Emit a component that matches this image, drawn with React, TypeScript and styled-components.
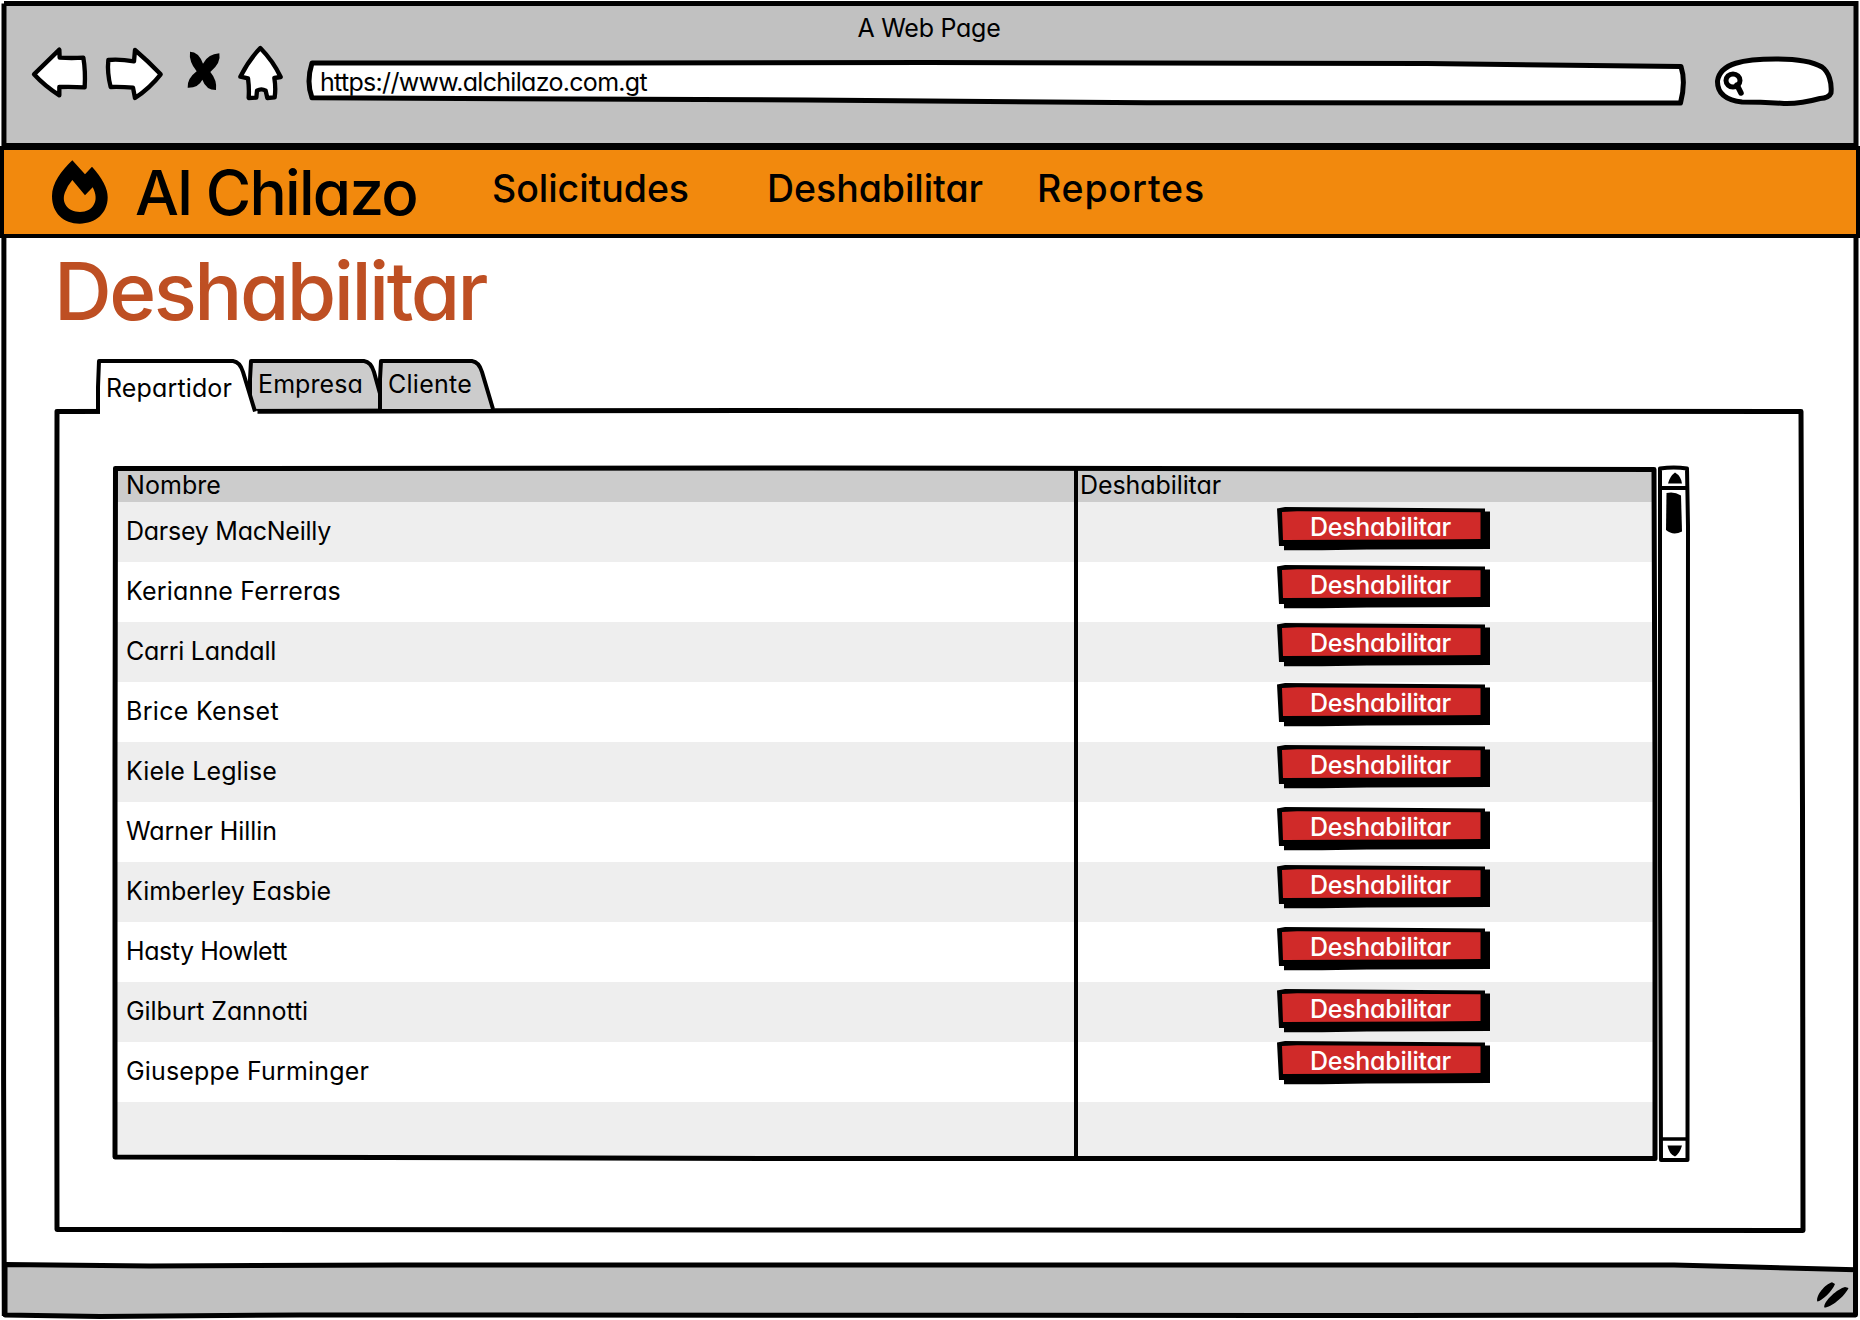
import React, { useLayoutEffect, useRef, useState } from "react";
import styled, { createGlobalStyle } from "styled-components";

const GlobalStyle = createGlobalStyle`
  *, *::before, *::after { box-sizing: border-box; }
  body {
    margin: 0;
    background: #fff;
    color: #000;
    font-family: Inter, Lato, "Liberation Sans", sans-serif;
    font-feature-settings: "cv11" 1, "calt" 0;
    font-size: 25px;
  }
  svg { display: block; }
`;

const Window = styled.div`
  position: relative;
  display: flex;
  flex-direction: column;
  width: 1860px;
  height: 1320px;
  overflow: hidden;
  background: #fff;
`;

/* Hand-drawn outline laid over the box that it belongs to. */
const Outline = styled.svg`
  position: absolute;
  inset: 0;
  width: 100%;
  height: 100%;
  overflow: visible;
  pointer-events: none;
`;

const Chrome = styled.header`
  display: flex;
  flex-direction: column;
  flex: none;
  height: 143px;
  margin: 3px 4px 0;
  background: #c1c1c1;
`;

const WindowTitle = styled.div`
  display: flex;
  justify-content: center;
  height: 40px;
  padding: 5px 2px 0 0;
  line-height: 40px;
`;

const Toolbar = styled.div`
  display: flex;
  align-items: flex-start;
  padding-left: 26px;
`;

const NavButton = styled.button<{ $width: number; $gap: number }>`
  flex: none;
  width: ${(p) => p.$width}px;
  height: 60px;
  margin: 0 ${(p) => p.$gap}px 0 0;
  padding: 0;
  border: 0;
  background: none;
`;

const AddressBar = styled.div`
  position: relative;
  display: flex;
  align-items: center;
  flex: none;
  width: 1379px;
  height: 46px;
  margin: 17px 28px 0 0;
  padding: 0 0 3px 13px;
`;

const SearchBox = styled.div`
  flex: none;
  width: 122px;
  height: 52px;
  margin-top: 12px;
`;

const Navbar = styled.nav`
  position: relative;
  z-index: 1;
  display: flex;
  align-items: flex-start;
  flex: none;
  height: 92px;
  padding: 0 0 0 48px;
  border: 4px solid #000;
  background: #f2890d;
`;

const Logo = styled.div`
  flex: none;
  width: 56px;
  height: 64px;
  margin: 10px 27px 0 0;
`;

const Brand = styled.div`
  flex: none;
  width: 357px;
  height: 84px;
  font-size: 62px;
  font-weight: 500;
  line-height: 85px;
`;

const NavLink = styled.a<{ $width: number }>`
  flex: none;
  width: ${(p) => p.$width}px;
  font-size: 37.5px;
  font-weight: 450;
  line-height: 77px;
`;

const Content = styled.main`
  display: flex;
  flex-direction: column;
  flex: 1;
  padding: 12px 54px 0;
`;

const PageTitle = styled.h1`
  margin: 0 0 29px;
  color: #be4f23;
  font-size: 80px;
  font-weight: 480;
  line-height: 81px;
  height: 80px;
`;

const Tabs = styled.div`
  display: flex;
  height: 49px;
  padding-left: 42px;
`;

const Tab = styled.div<{ $width: number; $overlap?: number; $level: number; $drop?: number }>`
  position: relative;
  z-index: ${(p) => p.$level};
  width: ${(p) => p.$width}px;
  height: 49px;
  margin-left: ${(p) => -(p.$overlap ?? 0)}px;
  padding: ${(p) => 5 + (p.$drop ?? 0)}px 0 0 10px;
  line-height: 40px;
`;

const TabText = styled.span`
  position: relative;
`;

const Panel = styled.section`
  position: relative;
  display: flex;
  align-items: flex-start;
  gap: 1px;
  width: 1752px;
  height: 825px;
  padding: 58px 0 0 59px;
`;

const Table = styled.div`
  position: relative;
  width: 1544px;
  height: 695px;
  padding: 4px;
`;

const TableRow = styled.div<{ $height: number; $tone: string }>`
  display: grid;
  grid-template-columns: 961px 1fr;
  height: ${(p) => p.$height}px;
  background: ${(p) => p.$tone};
`;

const NameCell = styled.div<{ $lift: number }>`
  display: flex;
  align-items: center;
  padding: 0 0 ${(p) => p.$lift}px 9px;
  border-right: 4px solid #000;
`;

const HeadCell = styled.div`
  display: flex;
  align-items: center;
  padding: 0 0 3px 2px;
`;

const ActionCell = styled.div<{ $top: number }>`
  padding-left: 199px;
  & > button { margin-top: ${(p) => p.$top}px; }
`;

const ActionButton = styled.button`
  position: relative;
  display: block;
  width: 213px;
  height: 44px;
  padding: 0 0 4px 33px;
  border: 0;
  background: none;
  color: #fff;
  font: inherit;
  font-feature-settings: inherit;
  font-weight: 500;
  line-height: 38px;
  text-align: left;
`;

const ScrollTrack = styled.div`
  position: relative;
  display: flex;
  flex-direction: column;
  align-items: center;
  justify-content: space-between;
  width: 32px;
  height: 696px;
`;

const ScrollHead = styled.div`
  width: 100%;
  height: 70px;
`;

const ScrollFoot = styled.div`
  width: 100%;
  height: 26px;
`;

const StatusBar = styled.footer`
  position: relative;
  flex: none;
  height: 60px;
`;

const Grow = styled.span`
  display: inline-block;
  white-space: nowrap;
`;

/* Spreads the letters so that a label takes up exactly the given width. */
function Label({ width, children }: { width: number; children: string }) {
  const ref = useRef<HTMLSpanElement>(null);
  const [spacing, setSpacing] = useState(0);
  useLayoutEffect(() => {
    if (!ref.current) return;
    const natural = ref.current.getBoundingClientRect().width - spacing * children.length;
    setSpacing((width - natural) / children.length);
  }, [width, children]);
  return (
    <Grow ref={ref} style={{ letterSpacing: `${spacing}px` }}>
      {children}
    </Grow>
  );
}

const people = [
  { name: "Darsey MacNeilly", width: 205, top: 5 },
  { name: "Kerianne Ferreras", width: 215, top: 3 },
  { name: "Carri Landall", width: 150, top: 1 },
  { name: "Brice Kenset", width: 153, top: 1 },
  { name: "Kiele Leglise", width: 151, top: 3 },
  { name: "Warner Hillin", width: 151, top: 5 },
  { name: "Kimberley Easbie", width: 205, top: 3 },
  { name: "Hasty Howlett", width: 161, top: 5 },
  { name: "Gilburt Zannotti", width: 182, top: 7 },
  { name: "Giuseppe Furminger", width: 243, top: -1 },
];

function DisableButton() {
  return (
    <ActionButton>
      <Outline viewBox="0 0 213 44" preserveAspectRatio="none">
        <path d="M0 1.5L8 0L208 1.5V4.5H213V42L90 42.4L45 43.3H7V39H2Z" fill="#000" />
        <path d="M5 5L20 4.2L110 4.8L203.5 5.2V32L150 32.6L70 32.8L6 33Z" fill="#d02a29" />
      </Outline>
      <TabText>
        <Label width={141}>Deshabilitar</Label>
      </TabText>
    </ActionButton>
  );
}

export default function App() {
  return (
    <>
      <GlobalStyle />
      <Window>
        <Chrome>
          <WindowTitle>
            <Label width={143}>A Web Page</Label>
          </WindowTitle>
          <Toolbar>
            <NavButton $width={60} $gap={13}>
              <svg width="60" height="60" viewBox="30 10 180 180">
                <path d="M42 104L118 30L119 54Q155 56 190 54Q197 95 194 143Q160 141 118 142L118 167Q75 140 42 104Z" fill="#fff" stroke="#000" strokeWidth="13" strokeLinejoin="round" />
              </svg>
            </NavButton>
            <NavButton $width={63} $gap={19}>
              <svg width="63" height="60" viewBox="249 10 189 180">
                <path d="M265 61Q300 58 342 65L345 31Q385 65 422 104Q390 145 345 175L339 144Q305 141 272 142Q261 100 265 61Z" fill="#fff" stroke="#000" strokeWidth="13" strokeLinejoin="round" />
              </svg>
            </NavButton>
            <NavButton $width={38} $gap={12}>
              <svg width="38" height="60" viewBox="495 10 114 180">
                <path d="M510 36Q536 36 549 72Q564 43 598 41Q604 70 571 97Q592 122 588 151Q558 151 547 120Q535 145 503 144Q501 117 530 95Q506 65 510 36Z" />
              </svg>
            </NavButton>
            <NavButton $width={54} $gap={18}>
              <svg width="54" height="60" viewBox="643 10 162 180">
                <path d="M719 25Q758 65 780 112L761 115Q766 145 762 173L740 175L735 153Q722 145 709 153L707 174L684 175Q686 145 682 116L659 111Q685 60 719 25Z" fill="#fff" stroke="#000" strokeWidth="13" strokeLinejoin="round" />
              </svg>
            </NavButton>
            <AddressBar>
              <Outline viewBox="0 0 1379 46" preserveAspectRatio="none">
                <path d="M5 3L300 3L620 2.5L1120 3.5L1374 6.5Q1379 22 1373.5 43L840 42.8L500 40L5 37.8Q-1 22 5 3Z" fill="#fff" stroke="#000" strokeWidth="5" strokeLinejoin="round" />
              </Outline>
              <TabText>
                <Label width={327}>https://www.alchilazo.com.gt</Label>
              </TabText>
            </AddressBar>
            <SearchBox>
              <svg width="122" height="52" viewBox="0 0 122 52">
                <path d="M28 47Q3 44 3.5 26C6 8 30 4 62 4Q94 4 108 12C115 17 118 28 117 38Q115 43 106 43.500Q86 49 70 48.500Q48 47 28 47Z" fill="#fff" stroke="#000" strokeWidth="5" strokeLinejoin="round" />
                <ellipse cx="19" cy="25.500" rx="7" ry="6.500" fill="#fff" stroke="#000" strokeWidth="5" />
                <path d="M23 30L27 38" stroke="#000" strokeWidth="5.500" strokeLinecap="round" />
              </svg>
            </SearchBox>
          </Toolbar>
        </Chrome>

        <Outline viewBox="0 0 1860 1320">
          <path d="M4 3.500L1856 3.500L1856 560L1855.500 1315M4 3.500L3.600 1080L4.300 1316" fill="none" stroke="#000" strokeWidth="5" />
          <path d="M4 145L1856 145" stroke="#000" strokeWidth="4" />
        </Outline>

        <Navbar>
          <Logo>
            <svg width="56" height="64" viewBox="37 30 168 192">
              <path fillRule="evenodd" d="M98 31L136 73L157 50Q204 102 204 142C204 190 168 221 120 221C72 221 37 190 37 138C37 100 65 62 98 31ZM98 90Q84 106 76 127C64 158 84 186 121 186C160 186 181 152 159 112L136 136Z" />
            </svg>
          </Logo>
          <Brand>
            <Label width={282}>Al Chilazo</Label>
          </Brand>
          <NavLink $width={275}>
            <Label width={197}>Solicitudes</Label>
          </NavLink>
          <NavLink $width={270}>
            <Label width={216}>Deshabilitar</Label>
          </NavLink>
          <NavLink $width={200}>
            <Label width={168}>Reportes</Label>
          </NavLink>
        </Navbar>

        <Content>
          <PageTitle>
            <Label width={432}>Deshabilitar</Label>
          </PageTitle>
          <Tabs>
            <Tab $width={160} $level={3} $drop={4}>
              <Outline viewBox="0 0 160 49">
                <path d="M4 55.500V2.500H137Q144 3 147 13L157.500 49L161.500 52V55.500Z" fill="#fff" />
                <path d="M2 52.500V28L3 2H137Q144 3 147 13L159 52.500" fill="none" stroke="#000" strokeWidth="4" strokeLinejoin="round" />
              </Outline>
              <TabText>
                <Label width={126}>Repartidor</Label>
              </TabText>
            </Tab>
            <Tab $width={136} $overlap={8} $level={1}>
              <Outline viewBox="0 0 136 49">
                <path d="M2 49V20L3 2H116Q123 3 126 13L136 49" fill="#ccc" stroke="#000" strokeWidth="4" strokeLinejoin="round" />
              </Outline>
              <TabText>
                <Label width={105}>Empresa</Label>
              </TabText>
            </Tab>
            <Tab $width={118} $overlap={6} $level={2}>
              <Outline viewBox="0 0 118 49">
                <path d="M2 50V20L3 2H94Q101 3 104 13L115 50" fill="#ccc" stroke="#000" strokeWidth="4" strokeLinejoin="round" />
              </Outline>
              <TabText>
                <Label width={84}>Cliente</Label>
              </TabText>
            </Tab>
          </Tabs>
          <Panel>
            <Outline viewBox="0 0 1752 825">
              <path d="M3 3.500L700 2.500L1747 3.500L1748.500 400L1749 822.500L900 822L3 821.500L2.500 400Z" fill="none" stroke="#000" strokeWidth="5" strokeLinejoin="round" />
            </Outline>
            <Table>
              <TableRow $height={32} $tone="#ccc">
                <NameCell $lift={3}>
                  <Label width={95}>Nombre</Label>
                </NameCell>
                <HeadCell>
                  <Label width={141}>Deshabilitar</Label>
                </HeadCell>
              </TableRow>
              {people.map((person, i) => (
                <TableRow key={person.name} $height={60} $tone={i % 2 ? "#fff" : "#eee"}>
                  <NameCell $lift={3}>
                    <Label width={person.width}>{person.name}</Label>
                  </NameCell>
                  <ActionCell $top={person.top}>
                    <DisableButton />
                  </ActionCell>
                </TableRow>
              ))}
              <TableRow $height={55} $tone="#eee">
                <NameCell $lift={0} />
                <div />
              </TableRow>
              <Outline viewBox="0 0 1544 695">
                <path d="M2.500 2.500L700 2L1541 3.500L1542 300L1542 692.500L700 692.500L2 691L2 300Z" fill="none" stroke="#000" strokeWidth="5" strokeLinejoin="round" />
              </Outline>
            </Table>
            <ScrollTrack>
              <Outline viewBox="0 0 32 696">
                <path d="M2 2.500Q16 .5 29 2.500L30 60L29.500 694H3L2 400Z" fill="none" stroke="#000" strokeWidth="4" strokeLinejoin="round" />
              </Outline>
              <ScrollHead>
                <svg width="32" height="70" viewBox="0 0 32 70">
                  <path d="M10 17.500Q12 10 17 6.500Q23 10 24 17.500Z" />
                  <path d="M3 22H30" stroke="#000" strokeWidth="4" />
                  <path d="M8.500 27Q16 25 23 29.500L24 65.500Q15 70 8 64Z" />
                </svg>
              </ScrollHead>
              <ScrollFoot>
                <svg width="32" height="26" viewBox="0 0 32 26">
                  <path d="M3 3H30" stroke="#000" strokeWidth="3.500" />
                  <path d="M9.500 9.500H24Q22 17 17 20.500Q11 18 9.500 9.500Z" />
                </svg>
              </ScrollFoot>
            </ScrollTrack>
          </Panel>
        </Content>

        <StatusBar>
          <Outline viewBox="0 0 1860 60">
            <path d="M5 4.500L150 6L400 5L1674 5L1855.500 9.800V55L1400 55.500L300 55L100 56.500L5 55Z" fill="#c1c1c1" stroke="#000" strokeWidth="5" strokeLinejoin="round" />
            <path d="M1832 22.300C1825 24.500 1816 35 1817.300 41.500C1822 41 1832.500 31 1835 24ZM1845 27C1838 28.500 1823.500 41 1824.300 47.500C1830 48 1844.500 37 1848.500 28Z" />
          </Outline>
        </StatusBar>
      </Window>
    </>
  );
}
